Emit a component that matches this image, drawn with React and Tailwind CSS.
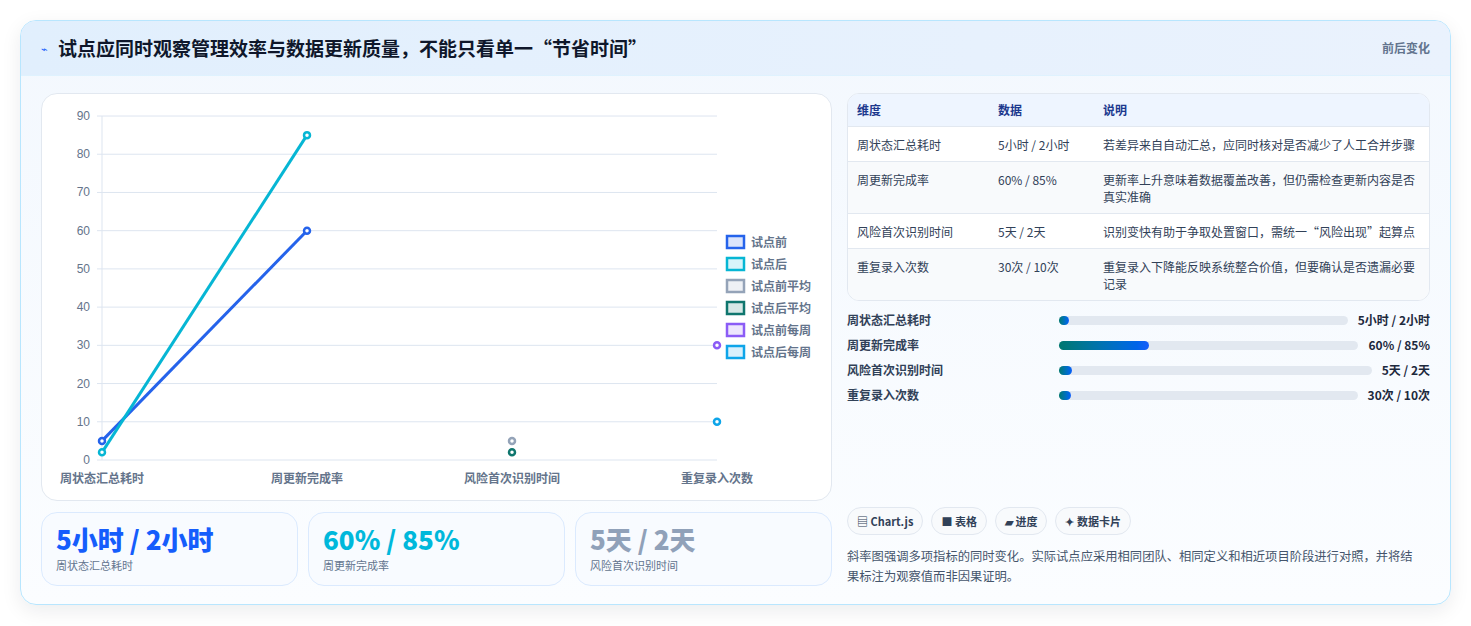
const font = { fontFamily: '"Noto Sans CJK SC", "Noto Sans", sans-serif' };

const rows = [
  ['周状态汇总耗时', '5小时 / 2小时', '若差异来自自动汇总，应同时核对是否减少了人工合并步骤'],
  ['周更新完成率', '60% / 85%', '更新率上升意味着数据覆盖改善，但仍需检查更新内容是否真实准确'],
  ['风险首次识别时间', '5天 / 2天', '识别变快有助于争取处置窗口，需统一“风险出现”起算点'],
  ['重复录入次数', '30次 / 10次', '重复录入下降能反映系统整合价值，但要确认是否遗漏必要记录'],
];

const bars = [
  ['周状态汇总耗时', '5小时 / 2小时', 3],
  ['周更新完成率', '60% / 85%', 30],
  ['风险首次识别时间', '5天 / 2天', 4],
  ['重复录入次数', '30次 / 10次', 4],
];

const legend = [
  ['试点前', '#2563eb', '#dbe4fb'],
  ['试点后', '#06b6d4', '#d7f4fa'],
  ['试点前平均', '#94a3b8', '#eef1f5'],
  ['试点后平均', '#0f766e', '#d6e8e6'],
  ['试点前每周', '#8b5cf6', '#ede6fd'],
  ['试点后每周', '#0ea5e9', '#d9f0fc'],
];

function Chart() {
  const ys = [0, 10, 20, 30, 40, 50, 60, 70, 80, 90];
  const y = (v) => 366 - v * 3.822;
  const cats = [['周状态汇总耗时', 60], ['周更新完成率', 265], ['风险首次识别时间', 470], ['重复录入次数', 675]];
  return (
    <svg width="791" height="407" viewBox="0 0 791 407" className="block">
      {ys.map((v) => (
        <g key={v}>
          <line x1="55" x2="675" y1={y(v)} y2={y(v)} stroke="#dde5f0" strokeWidth="1" />
          <text x="48" y={y(v) + 4} textAnchor="end" fontSize="12" fill="#64748b" fontFamily="Liberation Sans, sans-serif">{v}</text>
        </g>
      ))}
      <line x1="60" x2="60" y1="22" y2="366" stroke="#dde5f0" />
      {cats.map(([t, x]) => (
        <text key={t} x={x} y="389" textAnchor="middle" fontSize="12" fontWeight="600" fill="#64748b" style={font}>{t}</text>
      ))}
      <line x1="60" y1={y(5)} x2="265" y2={y(60)} stroke="#2563eb" strokeWidth="3" />
      <line x1="60" y1={y(2)} x2="265" y2={y(85)} stroke="#06b6d4" strokeWidth="3" />
      {[
        [60, 5, '#2563eb'], [265, 60, '#2563eb'], [60, 2, '#06b6d4'], [265, 85, '#06b6d4'],
        [470, 5, '#94a3b8'], [470, 2, '#0f766e'], [675, 30, '#8b5cf6'], [675, 10, '#0ea5e9'],
      ].map(([x, v, c], i) => (
        <circle key={i} cx={x} cy={y(v)} r="3" fill="white" stroke={c} strokeWidth="2.5" />
      ))}
      {legend.map(([t, c, f], i) => (
        <g key={t}>
          <rect x="685" y={142 + i * 22} width="17" height="12" fill={f} stroke={c} strokeWidth="2.5" />
          <text x="709" y={153 + i * 22} fontSize="12" fill="#64748b" fontWeight="600" style={font}>{t}</text>
        </g>
      ))}
    </svg>
  );
}

export default function App() {
  return (
    <div className="w-[1471px] h-[626px] bg-white p-5" style={font}>
      <div className="h-[585px] rounded-2xl border border-sky-200 shadow-[0_6px_20px_rgba(15,23,42,0.08)] overflow-hidden flex flex-col bg-gradient-to-b from-[#f3f8fe] to-[#fbfdff]">
        <div className="h-[55px] shrink-0 flex items-center justify-between px-5 bg-gradient-to-r from-[#e1effd] to-[#eaf2fd] border-b border-sky-100">
          <div className="flex items-center gap-2.5">
            <span className="text-[11px] text-blue-600">⌁</span>
            <h1 className="text-[19px] font-bold text-slate-900">试点应同时观察管理效率与数据更新质量，不能只看单一“节省时间”</h1>
          </div>
          <span className="text-[12px] font-semibold text-slate-500">前后变化</span>
        </div>
        <div className="flex-1 flex gap-[15px] px-5 pt-[17px] pb-[18px]">
          <div className="w-[791px] flex flex-col gap-[11px]">
            <div className="h-[408px] rounded-2xl border border-slate-200 bg-white">
              <Chart />
            </div>
            <div className="grid grid-cols-3 gap-[10px] flex-1">
              {[
                ['5小时 / 2小时', 'text-blue-600', '周状态汇总耗时'],
                ['60% / 85%', 'text-cyan-500', '周更新完成率'],
                ['5天 / 2天', 'text-slate-400', '风险首次识别时间'],
              ].map(([v, c, l]) => (
                <div key={l} className="rounded-2xl border border-blue-100 bg-[#f8fbff] px-[14px] pt-2">
                  <div className={`text-[26px] font-extrabold leading-[36px] ${c}`}>{v}</div>
                  <div className="text-[11px] text-slate-500">{l}</div>
                </div>
              ))}
            </div>
          </div>
          <div className="flex-1 flex flex-col">
            <div className="rounded-xl border border-slate-200 overflow-hidden bg-white text-[12px]">
              <div className="flex h-[33px] items-center bg-[#eef5ff] border-b border-slate-200 font-semibold text-blue-900">
                <div className="w-[150px] pl-[9px]">维度</div>
                <div className="w-[105px]">数据</div>
                <div className="flex-1">说明</div>
              </div>
              {rows.map(([a, b, c], i) => (
                <div key={a} className={`flex py-[8.5px] leading-[17px] ${i < 3 ? 'border-b border-slate-200' : ''} ${i % 2 ? 'bg-[#f8fafc]' : 'bg-white'} text-slate-700`}>
                  <div className="w-[150px] pl-[9px]">{a}</div>
                  <div className="w-[105px]">{b}</div>
                  <div className="flex-1 pr-[12px]">{c}</div>
                </div>
              ))}
            </div>
            <div className="flex flex-col gap-[7px] mt-[10px]">
              {bars.map(([l, v, p]) => (
                <div key={l} className="flex items-center h-[18px] text-[12px] font-semibold text-slate-700">
                  <div className="w-[212px]">{l}</div>
                  <div className="flex-1 h-[9px] rounded-full bg-slate-200 mr-[10px]">
                    <div className="h-full rounded-full bg-gradient-to-r from-teal-700 to-blue-600 min-w-[10px]" style={{ width: p + '%' }} />
                  </div>
                  <div className="font-bold text-slate-800">{v}</div>
                </div>
              ))}
            </div>
            <div className="mt-auto flex gap-2 text-[11px] font-semibold text-slate-700">
              {['▤ Chart.js', '■ 表格', '▰ 进度', '✦ 数据卡片'].map((t) => (
                <span key={t} className="rounded-full border border-slate-200 bg-slate-50 px-[9px] py-[5px]">{t}</span>
              ))}
            </div>
            <p className="mt-[11px] text-[12.3px] leading-[20px] text-slate-600 pr-[6px]">斜率图强调多项指标的同时变化。实际试点应采用相同团队、相同定义和相近项目阶段进行对照，并将结果标注为观察值而非因果证明。</p>
          </div>
        </div>
      </div>
    </div>
  );
}
